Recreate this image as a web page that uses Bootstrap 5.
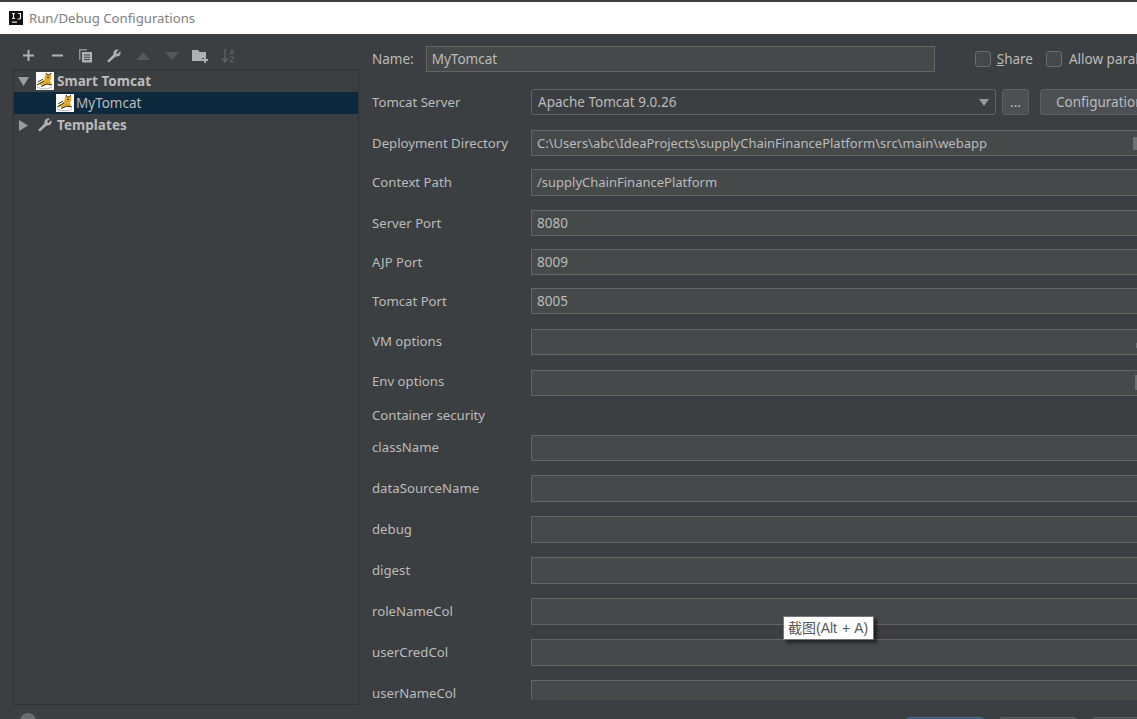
<!DOCTYPE html>
<html lang="en">
<head>
<meta charset="utf-8">
<title>Run/Debug Configurations</title>
<link href="https://cdn.jsdelivr.net/npm/bootstrap@5.3.0/dist/css/bootstrap.min.css" rel="stylesheet">
<style>
html,body{height:719px;width:1137px;overflow:hidden;margin:0;background:#3c3f41;}
body{font-family:"Noto Sans","Noto Sans CJK SC",sans-serif;font-size:13.5px;color:#bbbbbb;border-top:2px solid #3c3f41;}
.ide-title{height:32px;background:#fff;color:#808080;font-size:13.2px;padding-left:9px;gap:6px;}
.title-txt{padding-top:2px;}
.ide-shell{height:685px;position:relative;overflow:hidden;}
.left-col{width:358px;flex:none;padding:8px 0 0 13px;}
.tool-row{height:27px;padding-left:1px;}
.tool-slot{width:28.7px;display:flex;justify-content:center;}
.tree-panel{height:636px;width:346px;border:1px solid #2f3133;}
.tree-row{height:22px;white-space:nowrap;}
.tree-row.sel{background:#0d293e;padding-left:42px;}
.tree-bold{font-weight:700;letter-spacing:.05px;margin-left:3px;}
.tree-sel-txt{margin-left:2px;}
.tree-arrow{width:18px;display:flex;justify-content:center;}
.help-dot{width:16px;height:16px;border-radius:50%;background:#6a6d6f;margin:8px 0 0 7px;}
.right-col{flex:1 1 auto;min-width:0;}
.form-area{height:666px;overflow:hidden;display:grid;grid-template-columns:159px minmax(0,1fr);
 grid-template-rows:43px 41px 39px 41px 39px 39px 41px 41px 32px 33px 40px 41px 41px 41px 41px 41px 20px;
 padding:12px 0 0 14px;}
.field{background:#45494a;border:1px solid #646464;border-right:0;color:#bbb;padding:0 5px;height:26px;line-height:24px;white-space:nowrap;position:relative;}
.field.tall{height:27px;}
.field.cutoff{height:20px;border-bottom:0;}
.field-val{grid-column:2;}
.path-val{font-size:13px;}
.fld-ic{position:absolute;right:0;background:#6e7273;}
.ic-dir{width:4px;height:13px;top:6px;}
.ic-vm{width:1px;height:5px;top:13px;}
.ic-env{width:2px;height:15px;top:4px;}
.lbl{grid-column:1;height:26px;line-height:26px;white-space:nowrap;font-size:13.2px;}
.lbl.up1{line-height:24px;}
.lbl.up2{line-height:22px;}
.lbl.lbl-last{height:14px;line-height:14px;margin-top:6px;}
.name-row{grid-column:1 / 3;display:flex;align-items:center;height:26px;white-space:nowrap;min-width:0;}
.name-input{width:509px;margin-left:12px;border-right:1px solid #646464;flex:none;}
.chk{width:16px;height:16px;background:#43494a;border:1px solid #6b6b6b;border-radius:3px;flex:none;}
.share-chk{margin-left:40px;}
.chk-txt{margin-left:6px;}
.share-txt{margin-right:13px;}
.allow-txt{margin-left:7px;}
.combo-row{grid-column:2;display:flex;height:26px;min-width:0;}
.combo{width:465px;flex:none;background:#3c3f41;border:1px solid #646464;border-radius:3px;padding:0 6px;line-height:24px;position:relative;}
.combo-tri{position:absolute;right:6px;top:9px;width:0;height:0;border-left:5px solid transparent;border-right:5px solid transparent;border-top:7px solid #9a9a9a;}
.ide-btn{background:#4c5052;border:1px solid #5e6060;border-radius:3px;color:#bbb;line-height:24px;text-align:center;flex:none;}
.dots{width:27px;margin-left:6px;}
.conf{width:140px;margin-left:11px;padding-left:15px;text-align:left;white-space:nowrap;}
.tip{position:absolute;left:783px;top:582px;background:#fff;border:1px solid #767676;color:#575757;font-family:"Liberation Sans","Noto Sans CJK SC",sans-serif;font-size:14px;line-height:22px;padding:0 5px 0 4px;box-shadow:3px 3px 3px rgba(0,0,0,.5);white-space:nowrap;word-spacing:1px;}
.foot-row{padding:17px 0 0 0;margin-left:548px;gap:15px;}
.foot-btn{width:78px;height:26px;flex:none;background:#4c5052;border:1px solid #5e6060;border-radius:3px;}
.foot-btn.pri{background:#365880;border-color:#4c708c;}
</style>
</head>
<body>
<div class="ide-title d-flex align-items-center">
<svg width="14" height="14" viewBox="0 0 14 14"><rect width="14" height="14" fill="#111"/><rect x="3" y="10.500" width="5" height="1.200" fill="#eee"/><path d="M3 2.500h3M4.500 2.500v5M3 7.500h3M9 2.500h2.500v4.500q0 1-1.200 1H8.500" fill="none" stroke="#eee" stroke-width="1.200"/></svg>
<span class="title-txt">Run/Debug Configurations</span>
</div>
<div class="ide-shell d-flex">
 <div class="left-col">
  <div class="tool-row d-flex align-items-center">
   <span class="tool-slot"><svg width="13" height="13" viewBox="0 0 13 13"><path d="M6.500 1v11M1 6.500h11" stroke="#afb1b3" stroke-width="2"/></svg></span>
   <span class="tool-slot"><svg width="13" height="13" viewBox="0 0 13 13"><path d="M1 6.500h11" stroke="#afb1b3" stroke-width="2"/></svg></span>
   <span class="tool-slot"><svg width="15" height="15" viewBox="0 0 15 15"><path d="M1 1h8v1.500H2.500V12H1z" fill="#8f9294"/><rect x="4" y="4" width="10" height="10.500" fill="#afb1b3"/><path d="M6 7h6M6 9.300h6M6 11.600h6" stroke="#3c3f41" stroke-width="1"/></svg></span>
   <span class="tool-slot"><svg width="16" height="16" viewBox="0 0 16 16"><path d="M1 13l6.500-6.500C7 4 8.500 1.500 11 1.500c.7 0 1.200.1 1.700.4L10 4.500l1.500 1.500 2.700-2.700c.3.500.4 1 .4 1.700 0 2.700-2.700 4-5 3.500L3 14.500z" fill="#afb1b3"/></svg></span>
   <span class="tool-slot"><svg width="14" height="8" viewBox="0 0 14 8"><path d="M7 0l7 8H0z" fill="#55585a"/></svg></span>
   <span class="tool-slot"><svg width="14" height="8" viewBox="0 0 14 8"><path d="M0 0h14L7 8z" fill="#55585a"/></svg></span>
   <span class="tool-slot"><svg width="16" height="14" viewBox="0 0 16 14"><path d="M0 1h6l1.500 2H14v6H10v3H0z" fill="#afb1b3"/><path d="M13 8v6M10 11h6" stroke="#afb1b3" stroke-width="1.800"/></svg></span>
   <span class="tool-slot"><svg width="16" height="16" viewBox="0 0 16 16"><path d="M4 1v12M1 10l3 4 3-4" fill="none" stroke="#5c5f61" stroke-width="1.500"/><path d="M9 7l2-5 2 5M9.800 5h2.400M9 9h4l-4 5h4" fill="none" stroke="#5c5f61" stroke-width="1.200"/></svg></span>
  </div>
  <div class="tree-panel">
   <div class="tree-row d-flex align-items-center">
    <span class="tree-arrow"><svg width="11" height="9" viewBox="0 0 11 9"><path d="M0 0h11L5.500 9z" fill="#9a9c9e"/></svg></span>
    <svg class="ms-1" width="18" height="18" viewBox="0 0 18 18"><rect width="18" height="18" fill="#fff"/><path d="M2 12L8 8 9 3 10 1l1.500 2h2L15 1l.5 5L14 9l2 4-5-1-4 2z" fill="#e3ab2b"/><path d="M1 13l7-4M2 10l5-3M5 14.500L11 12l5 1M11 5l1 1 1-1M10 1l1.500 2h2L15 1" stroke="#3a3320" stroke-width="1" fill="none"/><path d="M1 15c4 2.500 10 2.500 15 0" stroke="#b5b5b5" fill="none"/></svg>
    <span class="tree-bold">Smart Tomcat</span>
   </div>
   <div class="tree-row sel d-flex align-items-center">
    <svg width="18" height="18" viewBox="0 0 18 18"><rect width="18" height="18" fill="#fff"/><path d="M2 12L8 8 9 3 10 1l1.500 2h2L15 1l.5 5L14 9l2 4-5-1-4 2z" fill="#e3ab2b"/><path d="M1 13l7-4M2 10l5-3M5 14.500L11 12l5 1M11 5l1 1 1-1M10 1l1.500 2h2L15 1" stroke="#3a3320" stroke-width="1" fill="none"/><path d="M1 15c4 2.500 10 2.500 15 0" stroke="#b5b5b5" fill="none"/></svg>
    <span class="tree-sel-txt">MyTomcat</span>
   </div>
   <div class="tree-row d-flex align-items-center">
    <span class="tree-arrow"><svg width="9" height="11" viewBox="0 0 9 11"><path d="M0 0l9 5.500L0 11z" fill="#9a9c9e"/></svg></span>
    <svg class="ms-1" width="18" height="16" viewBox="0 0 16 16"><path d="M1 13l6.500-6.500C7 4 8.500 1.500 11 1.500c.7 0 1.200.1 1.700.4L10 4.500l1.500 1.500 2.700-2.700c.3.500.4 1 .4 1.700 0 2.700-2.700 4-5 3.500L3 14.500z" fill="#afb1b3"/></svg>
    <span class="tree-bold">Templates</span>
   </div>
  </div>
  <div class="help-dot"></div>
 </div>
 <div class="right-col">
 <div class="form-area">
  <div class="name-row">
   <span>Name:</span>
   <div class="field name-input">MyTomcat</div>
   <span class="chk share-chk"></span><span class="chk-txt share-txt"><u>S</u>hare</span>
   <span class="chk"></span><span class="allow-txt">Allow parallel run</span>
  </div>
  <div class="lbl">Tomcat Server</div>
  <div class="combo-row">
   <div class="combo">Apache Tomcat 9.0.26<span class="combo-tri"></span></div>
   <div class="ide-btn dots">...</div>
   <div class="ide-btn conf">Configuration</div>
  </div>
  <div class="lbl">Deployment Directory</div><div class="field field-val path-val">C:\Users\abc\IdeaProjects\supplyChainFinancePlatform\src\main\webapp<span class="fld-ic ic-dir"></span></div>
  <div class="lbl">Context Path</div><div class="field tall field-val path-val">/supplyChainFinancePlatform</div>
  <div class="lbl">Server Port</div><div class="field field-val">8080</div>
  <div class="lbl">AJP Port</div><div class="field field-val">8009</div>
  <div class="lbl">Tomcat Port</div><div class="field field-val">8005</div>
  <div class="lbl up1">VM options</div><div class="field field-val"><span class="fld-ic ic-vm"></span></div>
  <div class="lbl up2">Env options</div><div class="field field-val"><span class="fld-ic ic-env"></span></div>
  <div class="lbl">Container security</div><div></div>
  <div class="lbl up1">className</div><div class="field field-val"></div>
  <div class="lbl">dataSourceName</div><div class="field tall field-val"></div>
  <div class="lbl">debug</div><div class="field tall field-val"></div>
  <div class="lbl">digest</div><div class="field tall field-val"></div>
  <div class="lbl">roleNameCol</div><div class="field tall field-val"></div>
  <div class="lbl">userCredCol</div><div class="field tall field-val"></div>
  <div class="lbl lbl-last">userNameCol</div><div class="field cutoff field-val"></div>
 </div>
 <div class="foot-row d-flex">
  <div class="foot-btn pri"></div><div class="foot-btn"></div><div class="foot-btn"></div>
 </div>
 </div>
 <div class="tip">截图(Alt + A)</div>
</div>
</body>
</html>
